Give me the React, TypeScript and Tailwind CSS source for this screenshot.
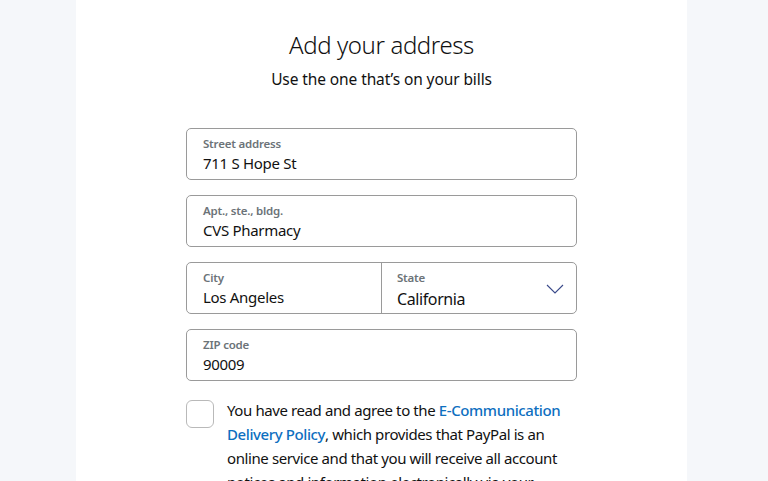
import React from "react";

function Field({ label, value }: { label: string; value: string }) {
  return (
    <div className="h-[52px] w-full rounded-[5px] border border-[#9a9a9a] px-4 pt-[7px] bg-white">
      <div className="text-[11.5px] leading-[16px] font-semibold tracking-[-0.2px] text-[#6c7378]">{label}</div>
      <div className="text-[15px] leading-[20px] tracking-[-0.3px] text-[#111] mt-[1px]">{value}</div>
    </div>
  );
}

export default function App() {
  return (
    <div
      className="min-h-[481px] w-full bg-[#f5f7fa] flex"
      style={{ fontFamily: '"Noto Sans", "Open Sans", sans-serif' }}
    >
      <div className="ml-[76px] w-[611px] h-[481px] overflow-hidden bg-white flex flex-col items-center">
        <h1 className="mt-[30px] text-[24px] leading-[30px] font-light tracking-[-0.4px] text-[#111]">Add your address</h1>
        <p className="mt-[8px] text-[15.5px] leading-[22px] tracking-[-0.1px] text-[#111]">Use the one that’s on your bills</p>
        <div className="mt-[38px] w-[391px] flex flex-col gap-[15px]">
          <Field label="Street address" value="711 S Hope St" />
          <Field label="Apt., ste., bldg." value="CVS Pharmacy" />
          <div className="h-[52px] w-full rounded-[5px] border border-[#9a9a9a] flex">
            <div className="w-[195px] border-r border-[#9a9a9a] px-4 pt-[7px]">
              <div className="text-[11.5px] leading-[16px] font-semibold tracking-[-0.2px] text-[#6c7378]">City</div>
              <div className="text-[15px] leading-[20px] tracking-[-0.3px] text-[#111] mt-[1px]">Los Angeles</div>
            </div>
            <div className="flex-1 pl-[15px] pr-[12px] pt-[7px] flex justify-between">
              <div>
                <div className="text-[11.5px] leading-[16px] font-semibold tracking-[-0.2px] text-[#6c7378]">State</div>
                <div className="text-[16px] leading-[20px] tracking-[-0.4px] text-[#111] mt-[3px]">California</div>
              </div>
              <svg width="18" height="10" viewBox="0 0 18 10" className="mt-[14px]" fill="none">
                <path d="M1 1l8 8 8-8" stroke="#3a4a8a" strokeWidth="1.1" />
              </svg>
            </div>
          </div>
          <Field label="ZIP code" value="90009" />
          <div className="flex mt-[4px]">
            <div className="w-[28px] h-[28px] shrink-0 rounded-[6px] border border-[#b9b9b9] bg-white" />
            <p className="ml-[13px] text-[15px] leading-[24px] tracking-[-0.4px] text-[#111] -mt-[2px]">
              You have read and agree to the{" "}
              <span className="text-[#0e6fbf] font-medium">E-Communication Delivery Policy</span>, which provides that
              PayPal is an online service and that you will receive all account notices and information electronically
              via your primary email address.
            </p>
          </div>
        </div>
      </div>
    </div>
  );
}
